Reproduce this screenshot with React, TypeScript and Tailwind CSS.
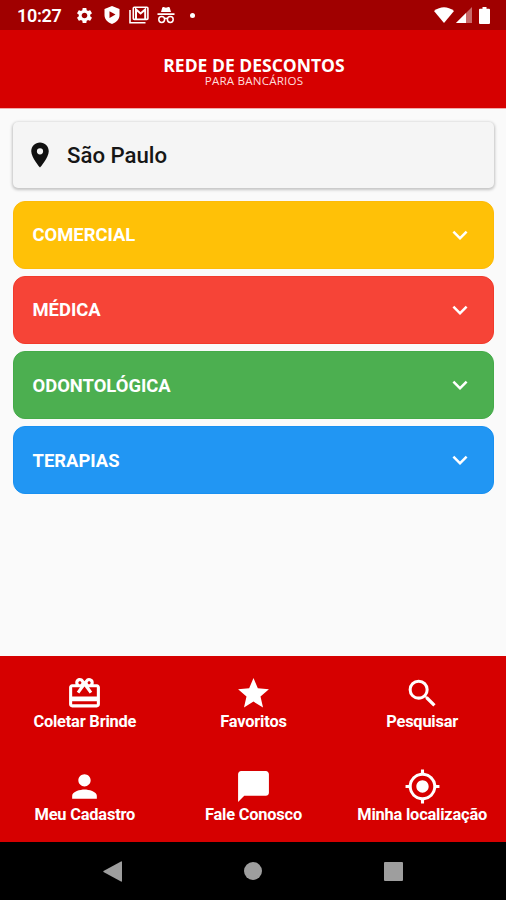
import type { ReactNode } from "react";
import {
  MdCardGiftcard,
  MdChatBubble,
  MdExpandMore,
  MdMyLocation,
  MdPerson,
  MdPlace,
  MdSearch,
  MdSettings,
  MdStar,
} from "react-icons/md";

const categories = [
  { name: "COMERCIAL", style: "bg-[#ffc107] border-[#fdbb08]" },
  { name: "MÉDICA", style: "bg-[#f64437] border-[#f23a2b]" },
  { name: "ODONTOLÓGICA", style: "bg-[#4caf50] border-[#45ab49]" },
  { name: "TERAPIAS", style: "bg-[#2196f3] border-[#1890f1]" },
];

function StatusBar() {
  return (
    <div className="flex h-[30px] shrink-0 items-center bg-[#a00000] pl-[17px] pr-[15px] text-white">
      <span className="w-[58px] pt-[2px] text-[18px] leading-[30px] font-semibold tracking-[-0.3px]">10:27</span>
      <MdSettings className="size-[19px]" />
      <svg viewBox="0 0 16 18" className="ml-[10px] h-[18px] w-4" fill="currentColor">
        <path fillRule="evenodd" d="M8 0 15.500 3V9C15.500 13 12.500 16.500 8 18 3.500 16.500.5 13 .5 9V3ZM5.500 5.300V12L11.500 8.600Z" />
      </svg>
      <svg viewBox="0 0 20 18" className="ml-[9px] h-[18px] w-5" fill="none" stroke="currentColor" strokeWidth="1.6">
        <path d="M1 4V16.800H16.500" />
        <rect x="4.300" y="1.200" width="14.600" height="12.200" rx="1" />
        <path d="M7 13V3.500L11.600 7.500 16.200 3.500V13" strokeWidth="2" />
      </svg>
      <svg viewBox="0 0 18 18" className="ml-2 size-[18px]">
        <path d="M5.300 1.600C5.500 1 6 .8 6.600 1L9 1.700 11.400 1C12 .8 12.500 1 12.700 1.600L14 6H4ZM.5 7.300H17.500V9H.5Z" fill="currentColor" />
        <g fill="none" stroke="currentColor" strokeWidth="1.500">
          <circle cx="4.700" cy="13.500" r="2.900" />
          <circle cx="13.300" cy="13.500" r="2.900" />
          <path d="M7.500 12.800Q9 11.800 10.500 12.800" />
        </g>
      </svg>
      <span className="ml-[15px] size-[5px] rounded-full bg-white" />
      <svg viewBox="0 0 20 16" className="ml-auto h-4 w-5" fill="currentColor">
        <path d="M0 4Q10-3.500 20 4L10 16Z" />
      </svg>
      <svg viewBox="0 0 16 16" className="ml-[2px] h-4 w-4">
        <path d="M16 0V16H0Z" fill="#c86a6a" />
        <path d="M10 6V16H0Z" fill="currentColor" />
      </svg>
      <svg viewBox="0 0 11 17" className="ml-[7px] mr-px h-[17px] w-[11px]" fill="currentColor">
        <path d="M3.500 0H7.500V1.800H10Q11 1.800 11 2.800V16Q11 17 10 17H1Q0 17 0 16V2.800Q0 1.800 1 1.800H3.500Z" />
      </svg>
    </div>
  );
}

function Action({ icon, label }: { icon: ReactNode; label: string }) {
  return (
    <button className="flex flex-col items-center pt-[18.500px] pl-px text-[37px] leading-none">
      {icon}
      <span className="pt-[0.500px] text-[16.400px] leading-[20px] font-bold tracking-[-0.200px] whitespace-nowrap">{label}</span>
    </button>
  );
}

export default function App() {
  return (
    <div className="flex h-[900px] w-[506px] flex-col overflow-hidden bg-[#fafafa] font-['Roboto',sans-serif]">
      <StatusBar />
      <header className="flex h-[79px] shrink-0 flex-col items-center border-b border-[#f3aaaa] bg-[#d60000] pt-[27px] pl-[2px] font-['Open_Sans',sans-serif] text-white">
        <h1 className="text-[17.500px] leading-[17px] font-bold whitespace-nowrap">REDE DE DESCONTOS</h1>
        <p className="text-[11.600px] leading-[14px] font-medium tracking-[0.200px] whitespace-nowrap text-[#ffdcdc]">PARA BANCÁRIOS</p>
      </header>
      <main className="flex flex-1 flex-col pt-[13px] pr-[12px] pl-[13px]">
        <div className="flex h-[66px] items-center rounded-[5px] bg-[#f5f5f5] pl-3 shadow-[0_1px_3px_1px_rgba(0,0,0,0.22)]">
          <MdPlace className="size-[30px] text-[#111]" />
          <span className="ml-3 text-[22.200px] leading-[30px] font-medium text-[#161616]">São Paulo</span>
        </div>
        <div className="mt-[12.500px] flex flex-col gap-[7.200px]">
          {categories.map((c) => (
            <button key={c.name} className={`flex h-[68px] items-center justify-between rounded-[12px] border pr-[18px] pl-[18.500px] text-white ${c.style}`}>
              <span className="pt-px text-[18.400px] font-bold">{c.name}</span>
              <MdExpandMore className="size-[30px]" />
            </button>
          ))}
        </div>
      </main>
      <nav className="grid h-[186px] shrink-0 grid-cols-3 grid-rows-2 bg-[#d60000] text-white">
        <Action icon={<MdCardGiftcard />} label="Coletar Brinde" />
        <Action icon={<MdStar />} label="Favoritos" />
        <Action icon={<MdSearch />} label="Pesquisar" />
        <Action icon={<MdPerson />} label="Meu Cadastro" />
        <Action icon={<MdChatBubble />} label="Fale Conosco" />
        <Action icon={<MdMyLocation />} label="Minha localização" />
      </nav>
      <div className="flex h-[58px] shrink-0 items-center justify-between bg-black pr-[103px] pl-[103px]">
        <svg viewBox="0 0 19 21" className="h-[21px] w-[19px] fill-[#9e9e9e]">
          <path d="M18 .5Q19 0 19 1V20Q19 21 18 20.500L.5 11Q0 10.500.5 10Z" />
        </svg>
        <span className="size-[18px] rounded-full bg-[#9e9e9e]" />
        <span className="size-[19px] rounded-[1px] bg-[#9e9e9e]" />
      </div>
    </div>
  );
}
